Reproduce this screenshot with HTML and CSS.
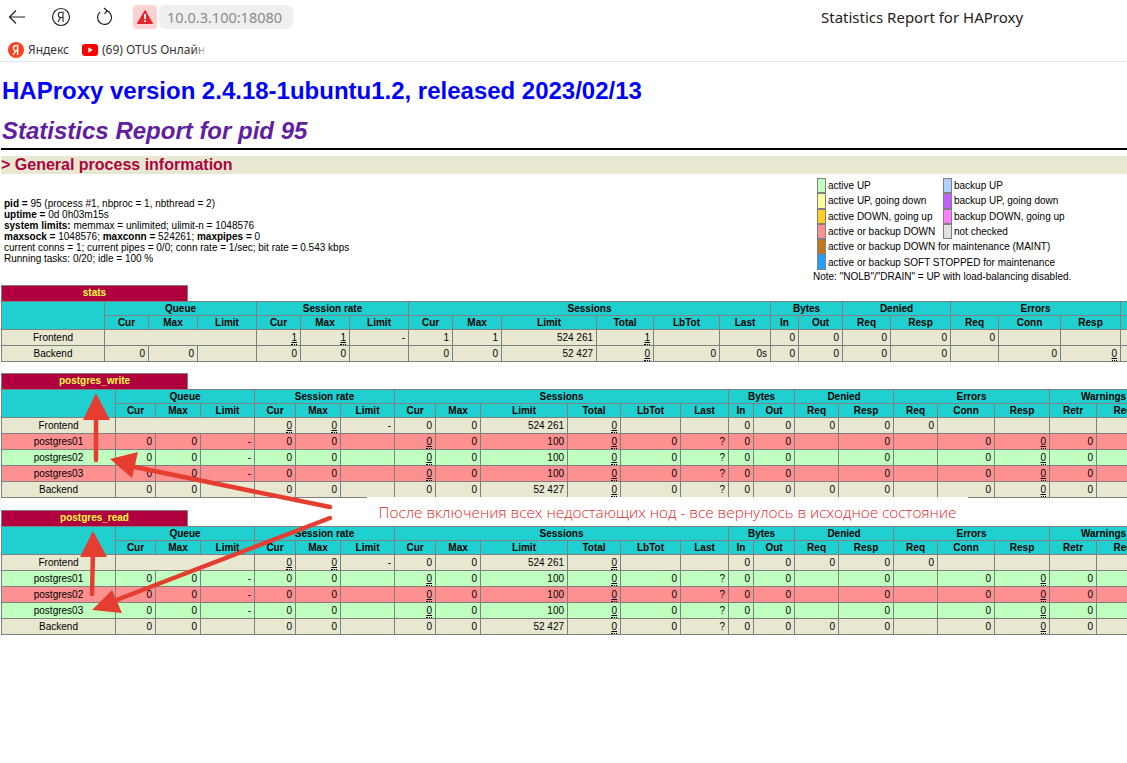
FILE: index.html
```html
<!DOCTYPE html>
<html lang="ru">
<head>
  <meta charset="UTF-8">
  <title>Statistics Report for HAProxy</title>
  <link rel="stylesheet" href="styles.css">
</head>
<body>
<div class="topbar">
  <svg class="nav-icon" width="24" height="24" viewBox="0 0 24 24"><path d="M20 12H4.500M11 5.500L4.500 12l6.500 6.500" fill="none" stroke="#222" stroke-width="1.200"/></svg>
  <svg class="nav-icon nav-ya" width="20" height="20" viewBox="0 0 20 20"><circle cx="10" cy="10" r="8.500" fill="none" stroke="#222" stroke-width="1.200"/><path d="M12 15V5.200H9.900c-1.600 0-2.600 1-2.600 2.600s1 2.700 2.600 2.700H12M9.400 10.500L7 15" fill="none" stroke="#222" stroke-width="1.100"/></svg>
  <svg class="nav-icon nav-reload" width="20" height="20" viewBox="0 0 20 20"><path d="M11.500 3.700a7 7 0 1 1-6.300 1.200" fill="none" stroke="#222" stroke-width="1.200"/><path d="M9 1l3.200 2.700-2.700 3.100" fill="none" stroke="#222" stroke-width="1.200"/></svg>
  <div class="warn-box">
    <svg width="16" height="14" viewBox="0 0 16 14"><path d="M8 0.500L15.600 13.500H0.400z" fill="#e0262c" stroke="#e0262c" stroke-linejoin="round"/><path d="M8 4v5M8 10.200v1.800" stroke="#fff" stroke-width="1.800"/></svg>
  </div>
  <div class="url-pill">10.0.3.100:18080</div>
  <div class="tab-title">Statistics Report for HAProxy</div>
</div>
<div class="bookmarks">
  <span class="bookmark">
    <svg width="16" height="16" viewBox="0 0 16 16"><circle cx="8" cy="8" r="8" fill="#fc3f1d"/><path d="M9.600 13V3.400H8.200C6.500 3.400 5.400 4.400 5.400 6s.8 2.500 2.100 3l-2.300 4M9.600 8.800H8" fill="none" stroke="#fff" stroke-width="1.500"/></svg>
    Яндекс
  </span>
  <span class="bookmark bookmark-fade">
    <svg width="16" height="12" viewBox="0 0 16 12"><rect width="16" height="12" rx="3" fill="#f00"/><path d="M6.300 3.300v5.400L11 6z" fill="#fff"/></svg>
    (69) OTUS Онлайн
  </span>
</div>

<div class="page">
  <h1>HAProxy version 2.4.18-1ubuntu1.2, released 2023/02/13</h1>
  <h2>Statistics Report for pid 95</h2>
  <hr class="rule">
  <h3>&gt; General process information</h3>

  <div class="info-row">
    <p class="info">
      <b>pid = </b>95 (process #1, nbproc = 1, nbthread = 2)<br>
      <b>uptime = </b>0d 0h03m15s<br>
      <b>system limits:</b> memmax = unlimited; ulimit-n = 1048576<br>
      <b>maxsock = </b>1048576; <b>maxconn = </b>524261; <b>maxpipes = </b>0<br>
      current conns = 1; current pipes = 0/0; conn rate = 1/sec; bit rate = 0.543 kbps<br>
      Running tasks: 0/20; idle = 100 %
    </p>
    <div class="legend">
      <div class="legend-grid">
        <span class="sw sw-up"></span><span>active UP</span>
        <span class="sw sw-nolb"></span><span>backup UP</span>
        <span class="sw sw-going-down"></span><span>active UP, going down</span>
        <span class="sw sw-b-going-down"></span><span>backup UP, going down</span>
        <span class="sw sw-going-up"></span><span>active DOWN, going up</span>
        <span class="sw sw-b-going-up"></span><span>backup DOWN, going up</span>
        <span class="sw sw-down"></span><span>active or backup DOWN</span>
        <span class="sw sw-unchecked"></span><span>not checked</span>
        <span class="sw sw-maint"></span><span class="wide">active or backup DOWN for maintenance (MAINT)</span>
        <span class="sw sw-drain"></span><span class="wide">active or backup SOFT STOPPED for maintenance</span>
      </div>
      <div class="legend-note">Note: "NOLB"/"DRAIN" = UP with load-balancing disabled.</div>
    </div>
  </div>

  <div class="pxname">stats</div>
  <table class="tbl tbl-stats">
    <colgroup><col><col><col><col><col><col><col><col><col><col><col><col><col><col><col><col><col><col><col><col><col><col></colgroup>
    <tr class="titre"><th rowspan="2"></th><th colspan="3">Queue</th><th colspan="3">Session rate</th><th colspan="6">Sessions</th><th colspan="2">Bytes</th><th colspan="2">Denied</th><th colspan="3">Errors</th><th colspan="2">Warnings</th></tr>
    <tr class="titre"><th>Cur</th><th>Max</th><th>Limit</th><th>Cur</th><th>Max</th><th>Limit</th><th>Cur</th><th>Max</th><th>Limit</th><th>Total</th><th>LbTot</th><th>Last</th><th>In</th><th>Out</th><th>Req</th><th>Resp</th><th>Req</th><th>Conn</th><th>Resp</th><th>Retr</th><th>Redis</th></tr>
    <tr class="plain"><td class="name">Frontend</td><td colspan="3"></td><td><u>1</u></td><td><u>1</u></td><td>-</td><td>1</td><td>1</td><td>524 261</td><td><u>1</u></td><td></td><td></td><td>0</td><td>0</td><td>0</td><td>0</td><td>0</td><td></td><td></td><td></td><td></td></tr>
    <tr class="plain"><td class="name">Backend</td><td>0</td><td>0</td><td></td><td>0</td><td>0</td><td></td><td>0</td><td>0</td><td>52 427</td><td><u>0</u></td><td>0</td><td>0s</td><td>0</td><td>0</td><td>0</td><td>0</td><td></td><td>0</td><td><u>0</u></td><td>0</td><td>0</td></tr>
  </table>

  <div class="pxname">postgres_write</div>
  <table class="tbl tbl-px">
    <colgroup><col><col><col><col><col><col><col><col><col><col><col><col><col><col><col><col><col><col><col><col><col><col></colgroup>
    <tr class="titre"><th rowspan="2"></th><th colspan="3">Queue</th><th colspan="3">Session rate</th><th colspan="6">Sessions</th><th colspan="2">Bytes</th><th colspan="2">Denied</th><th colspan="3">Errors</th><th colspan="2">Warnings</th></tr>
    <tr class="titre"><th>Cur</th><th>Max</th><th>Limit</th><th>Cur</th><th>Max</th><th>Limit</th><th>Cur</th><th>Max</th><th>Limit</th><th>Total</th><th>LbTot</th><th>Last</th><th>In</th><th>Out</th><th>Req</th><th>Resp</th><th>Req</th><th>Conn</th><th>Resp</th><th>Retr</th><th>Redis</th></tr>
    <tr class="plain"><td class="name">Frontend</td><td colspan="3"></td><td><u>0</u></td><td><u>0</u></td><td>-</td><td>0</td><td>0</td><td>524 261</td><td><u>0</u></td><td></td><td></td><td>0</td><td>0</td><td>0</td><td>0</td><td>0</td><td></td><td></td><td></td><td></td></tr>
    <tr class="down"><td class="name">postgres01</td><td>0</td><td>0</td><td>-</td><td>0</td><td>0</td><td></td><td><u>0</u></td><td>0</td><td>100</td><td><u>0</u></td><td>0</td><td>?</td><td>0</td><td>0</td><td></td><td>0</td><td></td><td>0</td><td><u>0</u></td><td>0</td><td>0</td></tr>
    <tr class="up"><td class="name">postgres02</td><td>0</td><td>0</td><td>-</td><td>0</td><td>0</td><td></td><td><u>0</u></td><td>0</td><td>100</td><td><u>0</u></td><td>0</td><td>?</td><td>0</td><td>0</td><td></td><td>0</td><td></td><td>0</td><td><u>0</u></td><td>0</td><td>0</td></tr>
    <tr class="down"><td class="name">postgres03</td><td>0</td><td>0</td><td>-</td><td>0</td><td>0</td><td></td><td><u>0</u></td><td>0</td><td>100</td><td><u>0</u></td><td>0</td><td>?</td><td>0</td><td>0</td><td></td><td>0</td><td></td><td>0</td><td><u>0</u></td><td>0</td><td>0</td></tr>
    <tr class="plain"><td class="name">Backend</td><td>0</td><td>0</td><td></td><td>0</td><td>0</td><td></td><td>0</td><td>0</td><td>52 427</td><td><u>0</u></td><td>0</td><td>?</td><td>0</td><td>0</td><td>0</td><td>0</td><td></td><td>0</td><td><u>0</u></td><td>0</td><td>0</td></tr>
  </table>

  <div class="pxname">postgres_read</div>
  <table class="tbl tbl-px">
    <colgroup><col><col><col><col><col><col><col><col><col><col><col><col><col><col><col><col><col><col><col><col><col><col></colgroup>
    <tr class="titre"><th rowspan="2"></th><th colspan="3">Queue</th><th colspan="3">Session rate</th><th colspan="6">Sessions</th><th colspan="2">Bytes</th><th colspan="2">Denied</th><th colspan="3">Errors</th><th colspan="2">Warnings</th></tr>
    <tr class="titre"><th>Cur</th><th>Max</th><th>Limit</th><th>Cur</th><th>Max</th><th>Limit</th><th>Cur</th><th>Max</th><th>Limit</th><th>Total</th><th>LbTot</th><th>Last</th><th>In</th><th>Out</th><th>Req</th><th>Resp</th><th>Req</th><th>Conn</th><th>Resp</th><th>Retr</th><th>Redis</th></tr>
    <tr class="plain"><td class="name">Frontend</td><td colspan="3"></td><td><u>0</u></td><td><u>0</u></td><td>-</td><td>0</td><td>0</td><td>524 261</td><td><u>0</u></td><td></td><td></td><td>0</td><td>0</td><td>0</td><td>0</td><td>0</td><td></td><td></td><td></td><td></td></tr>
    <tr class="up"><td class="name">postgres01</td><td>0</td><td>0</td><td>-</td><td>0</td><td>0</td><td></td><td><u>0</u></td><td>0</td><td>100</td><td><u>0</u></td><td>0</td><td>?</td><td>0</td><td>0</td><td></td><td>0</td><td></td><td>0</td><td><u>0</u></td><td>0</td><td>0</td></tr>
    <tr class="down"><td class="name">postgres02</td><td>0</td><td>0</td><td>-</td><td>0</td><td>0</td><td></td><td><u>0</u></td><td>0</td><td>100</td><td><u>0</u></td><td>0</td><td>?</td><td>0</td><td>0</td><td></td><td>0</td><td></td><td>0</td><td><u>0</u></td><td>0</td><td>0</td></tr>
    <tr class="up"><td class="name">postgres03</td><td>0</td><td>0</td><td>-</td><td>0</td><td>0</td><td></td><td><u>0</u></td><td>0</td><td>100</td><td><u>0</u></td><td>0</td><td>?</td><td>0</td><td>0</td><td></td><td>0</td><td></td><td>0</td><td><u>0</u></td><td>0</td><td>0</td></tr>
    <tr class="plain"><td class="name">Backend</td><td>0</td><td>0</td><td></td><td>0</td><td>0</td><td></td><td>0</td><td>0</td><td>52 427</td><td><u>0</u></td><td>0</td><td>?</td><td>0</td><td>0</td><td>0</td><td>0</td><td></td><td>0</td><td><u>0</u></td><td>0</td><td>0</td></tr>
  </table>
</div>

<!-- annotation drawn over the screenshot -->
<div class="note-box">После включения всех недостающих нод - все вернулось в исходное состояние</div>
<svg class="arrows" width="1127" height="763" viewBox="0 0 1127 763">
  <path d="M96 460V415M330 507L125 465M330 518L106 604M92 594L93 550" fill="none" stroke="#e53e30" stroke-width="4.500" stroke-linecap="round"/>
  <path d="M96 393L110 420H83z" fill="#e53e30"/>
  <path d="M110 459L138 452L132 478z" fill="#e53e30"/>
  <path d="M92 610L112 590L122 613z" fill="#e53e30"/>
  <path d="M93 531L107 557H80z" fill="#e53e30"/>
</svg>
</body>
</html>
```

FILE: styles.css
```css
* {
  box-sizing: border-box;
}

html, body {
  height: 763px;
  margin: 0;
  overflow: hidden;
}

body {
  position: relative;
  background: #fff;
  color: #000;
  font: 10px "Liberation Sans", Arial, sans-serif;
}

/* browser chrome */
.topbar {
  display: flex;
  align-items: center;
  height: 34px;
  padding-left: 5px;
}

.nav-icon {
  flex: none;
}

.nav-ya {
  margin-left: 22px;
}

.nav-reload {
  margin-left: 24px;
}

.warn-box {
  display: flex;
  align-items: center;
  justify-content: center;
  width: 24px;
  height: 24px;
  margin-left: 18px;
  border-radius: 4px;
  background: #fcd2d2;
}

.url-pill {
  width: 134px;
  height: 24px;
  margin-left: 2px;
  padding-left: 8px;
  border-radius: 6px;
  background: #efefef;
  color: #8a8a8a;
  font: 14.500px/25px "Noto Sans", sans-serif;
}

.tab-title {
  margin-left: 528px;
  color: #222;
  font: 15px "Noto Sans", sans-serif;
  white-space: nowrap;
}

.bookmarks {
  display: flex;
  align-items: center;
  gap: 13px;
  height: 28px;
  padding: 4px 0 0 8px;
  border-bottom: 1px solid #e4e4e4;
  color: #333;
  font: 12px "Noto Sans", sans-serif;
}

.bookmark {
  display: flex;
  align-items: center;
  gap: 4px;
}

.bookmark-fade {
  position: relative;
  width: 126px;
  overflow: hidden;
  white-space: nowrap;
}

.bookmark-fade::after {
  content: "";
  position: absolute;
  top: 0;
  right: 0;
  bottom: 0;
  width: 14px;
  background: linear-gradient(to right, rgba(255, 255, 255, 0), #fff);
}

/* stats page */
.page {
  padding-left: 1px;
}

h1 {
  margin: 0;
  padding: 14px 0 0 1px;
  height: 49px;
  color: #0000ff;
  font-size: 24px;
  line-height: 29px;
  word-spacing: -0.100px;
}

h2 {
  margin: 0;
  padding-left: 1px;
  height: 37px;
  color: #6020a0;
  font-size: 24px;
  font-style: italic;
  line-height: 40px;
}

.rule {
  height: 2px;
  margin: 0;
  border: 0;
  background: #000;
}

h3 {
  height: 18px;
  margin: 6px 0 0;
  background: #e8e8d0;
  color: #b00040;
  font-size: 16px;
  line-height: 18px;
}

.info-row {
  display: flex;
  height: 111px;
}

.info {
  flex: 0 0 812px;
  margin: 0;
  padding: 24px 0 0 3px;
  line-height: 11px;
}

.legend {
  padding-top: 4px;
}

.legend-grid {
  display: grid;
  grid-template-columns: 9px 117px 9px 1fr;
  grid-auto-rows: 15.300px;
  margin-left: 4px;
}

.legend-grid > span:not(.sw) {
  align-self: center;
  padding-left: 2px;
  white-space: nowrap;
}

.legend-grid .wide {
  grid-column: 2 / 5;
}

.sw {
  border: 1px solid #808080;
}

.sw-up { background: #c0ffc0; }
.sw-nolb { background: #b0d0ff; }
.sw-going-down { background: #ffffa0; }
.sw-b-going-down { background: #c060ff; }
.sw-going-up { background: #ffd020; }
.sw-b-going-up { background: #ff80ff; }
.sw-down { background: #ff9090; }
.sw-unchecked { background: #e0e0e0; }
.sw-maint { background: #c07820; }
.sw-drain { background: #20a0ff; }

.legend-note {
  margin-top: 0;
  line-height: 13px;
  white-space: nowrap;
}

.pxname {
  width: 187px;
  height: 16px;
  border: 1px solid #808080;
  border-bottom: 0;
  background: #b00040;
  color: #ffff40;
  font-weight: bold;
  line-height: 13px;
  text-align: center;
}

.tbl {
  border-collapse: collapse;
  table-layout: fixed;
}

.tbl th, .tbl td {
  height: 16px;
  padding: 0 3px;
  border: 1px solid #808080;
  line-height: 12px;
  white-space: nowrap;
  overflow: hidden;
}

.tbl td {
  text-align: right;
}

.tbl .name {
  text-align: center;
}

.titre th {
  height: 14px;
  background: #20d0d0;
  font-weight: bold;
  text-align: center;
}

.plain td { background: #e8e8d0; }
.down td { background: #ff9090; }
.up td { background: #c0ffc0; }

u {
  padding-bottom: 1px;
  border-bottom: 1px dotted #000;
}

.tbl-stats {
  width: 1219px;
  margin-bottom: 11px;
}

.tbl-stats col:nth-child(1) { width: 103px; }
.tbl-stats col:nth-child(2) { width: 44px; }
.tbl-stats col:nth-child(3) { width: 49px; }
.tbl-stats col:nth-child(4) { width: 59px; }
.tbl-stats col:nth-child(5) { width: 44px; }
.tbl-stats col:nth-child(6) { width: 49px; }
.tbl-stats col:nth-child(7) { width: 59px; }
.tbl-stats col:nth-child(8) { width: 44px; }
.tbl-stats col:nth-child(9) { width: 49px; }
.tbl-stats col:nth-child(10) { width: 95px; }
.tbl-stats col:nth-child(11) { width: 57px; }
.tbl-stats col:nth-child(12) { width: 66px; }
.tbl-stats col:nth-child(13) { width: 51px; }
.tbl-stats col:nth-child(14) { width: 28px; }
.tbl-stats col:nth-child(15) { width: 44px; }
.tbl-stats col:nth-child(16) { width: 48px; }
.tbl-stats col:nth-child(17) { width: 60px; }
.tbl-stats col:nth-child(18) { width: 48px; }
.tbl-stats col:nth-child(19) { width: 62px; }
.tbl-stats col:nth-child(20) { width: 60px; }
.tbl-stats col:nth-child(21) { width: 50px; }
.tbl-stats col:nth-child(22) { width: 50px; }

.tbl-px {
  width: 1156px;
  margin-bottom: 12px;
}

.tbl-px col:nth-child(1) { width: 114px; }
.tbl-px col:nth-child(2) { width: 40px; }
.tbl-px col:nth-child(3) { width: 45px; }
.tbl-px col:nth-child(4) { width: 54px; }
.tbl-px col:nth-child(5) { width: 41px; }
.tbl-px col:nth-child(6) { width: 45px; }
.tbl-px col:nth-child(7) { width: 54px; }
.tbl-px col:nth-child(8) { width: 41px; }
.tbl-px col:nth-child(9) { width: 45px; }
.tbl-px col:nth-child(10) { width: 87px; }
.tbl-px col:nth-child(11) { width: 53px; }
.tbl-px col:nth-child(12) { width: 60px; }
.tbl-px col:nth-child(13) { width: 48px; }
.tbl-px col:nth-child(14) { width: 25px; }
.tbl-px col:nth-child(15) { width: 41px; }
.tbl-px col:nth-child(16) { width: 44px; }
.tbl-px col:nth-child(17) { width: 55px; }
.tbl-px col:nth-child(18) { width: 44px; }
.tbl-px col:nth-child(19) { width: 57px; }
.tbl-px col:nth-child(20) { width: 55px; }
.tbl-px col:nth-child(21) { width: 47px; }
.tbl-px col:nth-child(22) { width: 61px; }

/* annotation layer */
.note-box {
  position: absolute;
  top: 497px;
  left: 367px;
  width: 601px;
  height: 29px;
  background: #fff;
  color: #dd2a1f;
  font: 300 15.300px/31px "Open Sans", sans-serif;
  text-align: center;
  white-space: nowrap;
}

.arrows {
  position: absolute;
  top: 0;
  left: 0;
  pointer-events: none;
}
```
